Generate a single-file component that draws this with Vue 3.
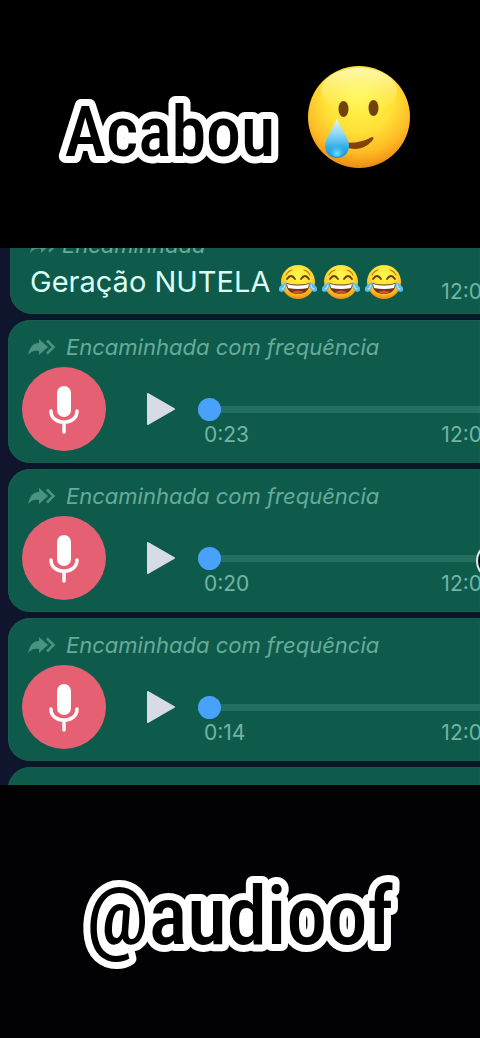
<script setup>
import { ref } from 'vue'

const messages = ref([
  { id: 1, length: '0:23', time: '12:0', position: 0 },
  { id: 2, length: '0:20', time: '12:0', position: 0, marker: true },
  { id: 3, length: '0:14', time: '12:0', position: 0 },
  { id: 4, length: '0:12', time: '12:0', position: 0 }
])
const laughs = 3
</script>

<template>
  <main class="story">
    <svg class="defs" width="0" height="0" aria-hidden="true">
      <defs>
        <radialGradient id="face" cx="50%" cy="30%" r="70%">
          <stop offset="0" stop-color="#fff94f" />
          <stop offset="0.5" stop-color="#ffe036" />
          <stop offset="0.8" stop-color="#fdb924" />
          <stop offset="1" stop-color="#ee8a12" />
        </radialGradient>
        <linearGradient id="shine" x1="0" y1="0" x2="0" y2="1">
          <stop offset="0" stop-color="#fffbc4" stop-opacity="0.85" />
          <stop offset="1" stop-color="#fff36b" stop-opacity="0" />
        </linearGradient>
        <linearGradient id="tear" x1="0" y1="0" x2="0" y2="1">
          <stop offset="0" stop-color="#e9f8fb" />
          <stop offset="0.4" stop-color="#8fd7f3" />
          <stop offset="0.75" stop-color="#2bacea" />
          <stop offset="1" stop-color="#1a8fd8" />
        </linearGradient>
        <radialGradient id="drop" cx="50%" cy="80%" r="50%">
          <stop offset="0" stop-color="#7fe6fb" />
          <stop offset="1" stop-color="#35b5ee" stop-opacity="0" />
        </radialGradient>
        <symbol id="laugh" viewBox="0 0 38 36">
          <circle cx="19" cy="18" r="17" fill="url(#face)" />
          <path d="M8 15q4-6 8 0M22 15q4-6 8 0" fill="none" stroke="#6b3d0c" stroke-width="1.8" stroke-linecap="round" />
          <path d="M7 11q2-4 6-5M25 6q4 1 6 5" fill="none" stroke="#c47a16" stroke-width="1.2" stroke-linecap="round" />
          <path d="M7 19q12 3 24 0q-1 11-12 11T7 19z" fill="#6d3713" />
          <path d="M8 20q11 3 22 0l-1 4q-10 2-20 0z" fill="#fff" />
          <path d="M13 28q6-3 12 0q-6 4-12 0z" fill="#c9552f" />
          <path d="M8 18q-1 9-5 10q-4 0-3-4q1-3 8-6z" fill="#58bdeb" />
          <path d="M30 18q1 9 5 10q4 0 3-4q-1-3-8-6z" fill="#58bdeb" />
          <path d="M6 21q-1 4-3 4M32 21q1 4 3 4" fill="none" stroke="#b7ebfa" stroke-width="1.2" stroke-linecap="round" />
        </symbol>
        <symbol id="forward" viewBox="0 0 28 18">
          <path d="M0 17C2 9 5 5 11 5V1l9 8-9 8v-4C7 12 3 13 0 17z" fill="currentColor" />
          <path d="M19 2.500l6.500 6.500-6.500 6.500" fill="none" stroke="currentColor" stroke-width="2.600" />
        </symbol>
      </defs>
    </svg>

    <header class="top">
      <h1 class="caption caption-top">
        <svg viewBox="0 0 216 80"><text x="108" y="71" text-anchor="middle">Acabou</text></svg>
      </h1>
      <svg class="tearful" viewBox="0 0 104 104" role="img" aria-label="Rosto sorridente com lágrima">
        <circle cx="52" cy="52" r="51" fill="url(#face)" />
        <ellipse cx="52" cy="26" rx="38" ry="23" fill="url(#shine)" />
        <ellipse cx="36.500" cy="44" rx="5" ry="8" fill="#70430c" />
        <ellipse cx="66.500" cy="43" rx="5" ry="8" fill="#70430c" />
        <path d="M35 77Q50 80 65 72Q68 72 65 76Q54 88 38 82z" fill="#844109" />
        <path d="M30 53C33 64 42 71 42 81C42 97 18 97 18 81C18 71 27 64 30 53z" fill="url(#tear)" />
        <ellipse cx="30" cy="83" rx="9" ry="9" fill="url(#drop)" />
      </svg>
    </header>

    <section class="chat" aria-label="Conversa">
      <article class="bubble text-bubble">
        <p class="forwarded">
          <svg class="arrow"><use href="#forward" /></svg>
          <span>Encaminhada</span>
        </p>
        <div class="message">
          <p class="words">Geração NUTELA</p>
          <svg v-for="n in laughs" :key="n" class="laugh" role="img" aria-label="Rindo até chorar"><use href="#laugh" /></svg>
          <time class="stamp">12:0</time>
        </div>
      </article>

      <article v-for="m in messages" :key="m.id" class="bubble">
        <p class="forwarded">
          <svg class="arrow"><use href="#forward" /></svg>
          <span>Encaminhada com frequência</span>
        </p>
        <div class="player">
          <svg class="mic" viewBox="0 0 84 84" aria-hidden="true">
            <circle cx="42" cy="42" r="42" fill="#e66073" />
            <rect x="35" y="19" width="14" height="31" rx="7" fill="#fff" />
            <path d="M29 44C29 59 55 59 55 44M42 55V65" fill="none" stroke="#fff" stroke-width="3.500" stroke-linecap="round" />
          </svg>
          <button class="play" type="button" aria-label="Reproduzir">
            <svg viewBox="0 0 30 34"><path d="M2 2L28 17L2 32z" fill="#d6dbe6" stroke="#d6dbe6" stroke-width="2" stroke-linejoin="round" /></svg>
          </button>
          <div class="track">
            <input v-model="m.position" class="seek" type="range" min="0" max="100" aria-label="Posição do áudio" />
            <div class="times">
              <span>{{ m.length }}</span>
              <time>{{ m.time }}</time>
            </div>
          </div>
        </div>
        <span v-if="m.marker" class="marker"></span>
      </article>
    </section>

    <footer class="bottom">
      <p class="caption caption-bottom">
        <svg viewBox="0 0 316 80"><text x="158" y="72" text-anchor="middle">@audioof</text></svg>
      </p>
    </footer>
  </main>
</template>

<style>
body {
  margin: 0;
  background: #000;
}
</style>

<style scoped>
.story {
  display: grid;
  grid-template-rows: minmax(0, 248fr) minmax(0, 537fr) minmax(0, 253fr);
  height: 100vh;
  overflow: hidden;
  background: #020104;
  font-family: Inter, "Liberation Sans", sans-serif;
}
.defs {
  position: absolute;
}
p, h1 {
  margin: 0;
}
.top {
  display: flex;
  align-items: center;
  justify-content: center;
  gap: 29px;
  padding: 0 7px 14px 0;
  background: #000;
}
.caption {
  font-family: "Roboto Condensed", Roboto, Lato, sans-serif;
  font-weight: 500;
  line-height: 80px;
}
.caption svg {
  display: block;
  height: 80px;
  overflow: visible;
}
.caption text {
  fill: #000;
  stroke: #fff;
  stroke-width: 14px;
  stroke-linejoin: round;
  paint-order: stroke;
}
.caption-top {
  padding-top: 16px;
  font-size: 70px;
}
.caption-top svg {
  width: 216px;
}
.caption-bottom {
  font-size: 81px;
}
.caption-bottom svg {
  width: 316px;
}
.tearful {
  width: 104px;
  height: 104px;
}
.chat {
  display: flex;
  flex-direction: column;
  gap: 6px;
  overflow: hidden;
  background: linear-gradient(90deg, #11152f, #071826 10%);
}
.bubble {
  position: relative;
  flex: none;
  box-sizing: border-box;
  margin-left: 8px;
  padding: 13px 0 12px 14px;
  border-radius: 22px;
  border-top-right-radius: 0;
  border-bottom-right-radius: 0;
  background: #0f5b4b;
  box-shadow: inset 0 0 1px 1px #1c5a52;
}
.text-bubble {
  margin-top: -30px;
  margin-left: 10px;
}
.forwarded {
  display: flex;
  align-items: center;
  gap: 10px;
  padding-left: 6px;
  font-size: 22px;
  font-style: italic;
  line-height: 28px;
  color: #66ab9b;
  white-space: nowrap;
}
.text-bubble .forwarded {
  gap: 4px;
}
.arrow {
  width: 28px;
  height: 18px;
  color: #4b9381;
}
.message {
  display: flex;
  align-items: center;
  gap: 5px;
  padding: 3px 0 0 6px;
}
.words {
  margin-right: 4px;
  font-size: 29px;
  line-height: 38px;
  color: #dcfff7;
  white-space: nowrap;
}
.laugh {
  flex: none;
  width: 38px;
  height: 36px;
}
.stamp {
  margin-left: auto;
  margin-right: -2px;
  padding-top: 20px;
  font-size: 21px;
  line-height: 20px;
  color: #72b4a4;
}
.player {
  display: flex;
  margin-top: 6px;
}
.mic {
  flex: none;
  width: 84px;
  height: 84px;
}
.play {
  align-self: center;
  width: 30px;
  height: 34px;
  margin: 0 22px 0 40px;
  padding: 0;
  border: 0;
  background: none;
}
.play svg {
  display: block;
  width: 30px;
  height: 34px;
}
.track {
  flex: 1;
  min-width: 0;
  padding-top: 30px;
}
.seek {
  display: block;
  width: 100%;
  height: 24px;
  margin: 0;
  appearance: none;
  background: linear-gradient(#256f61, #256f61) center / 100% 7px no-repeat;
}
.seek::-webkit-slider-thumb {
  appearance: none;
  width: 23px;
  height: 23px;
  border-radius: 50%;
  background: #48a1fb;
}
.times {
  display: flex;
  justify-content: space-between;
  margin: 2px -2px 0 6px;
  font-size: 21px;
  line-height: 24px;
  color: #72b4a4;
}
.marker {
  position: absolute;
  top: 73px;
  right: -34px;
  width: 34px;
  height: 34px;
  border: 2px solid #d4ebe6;
  border-radius: 50%;
  background: #071218;
}
.bottom {
  display: flex;
  align-items: center;
  justify-content: center;
}
</style>
